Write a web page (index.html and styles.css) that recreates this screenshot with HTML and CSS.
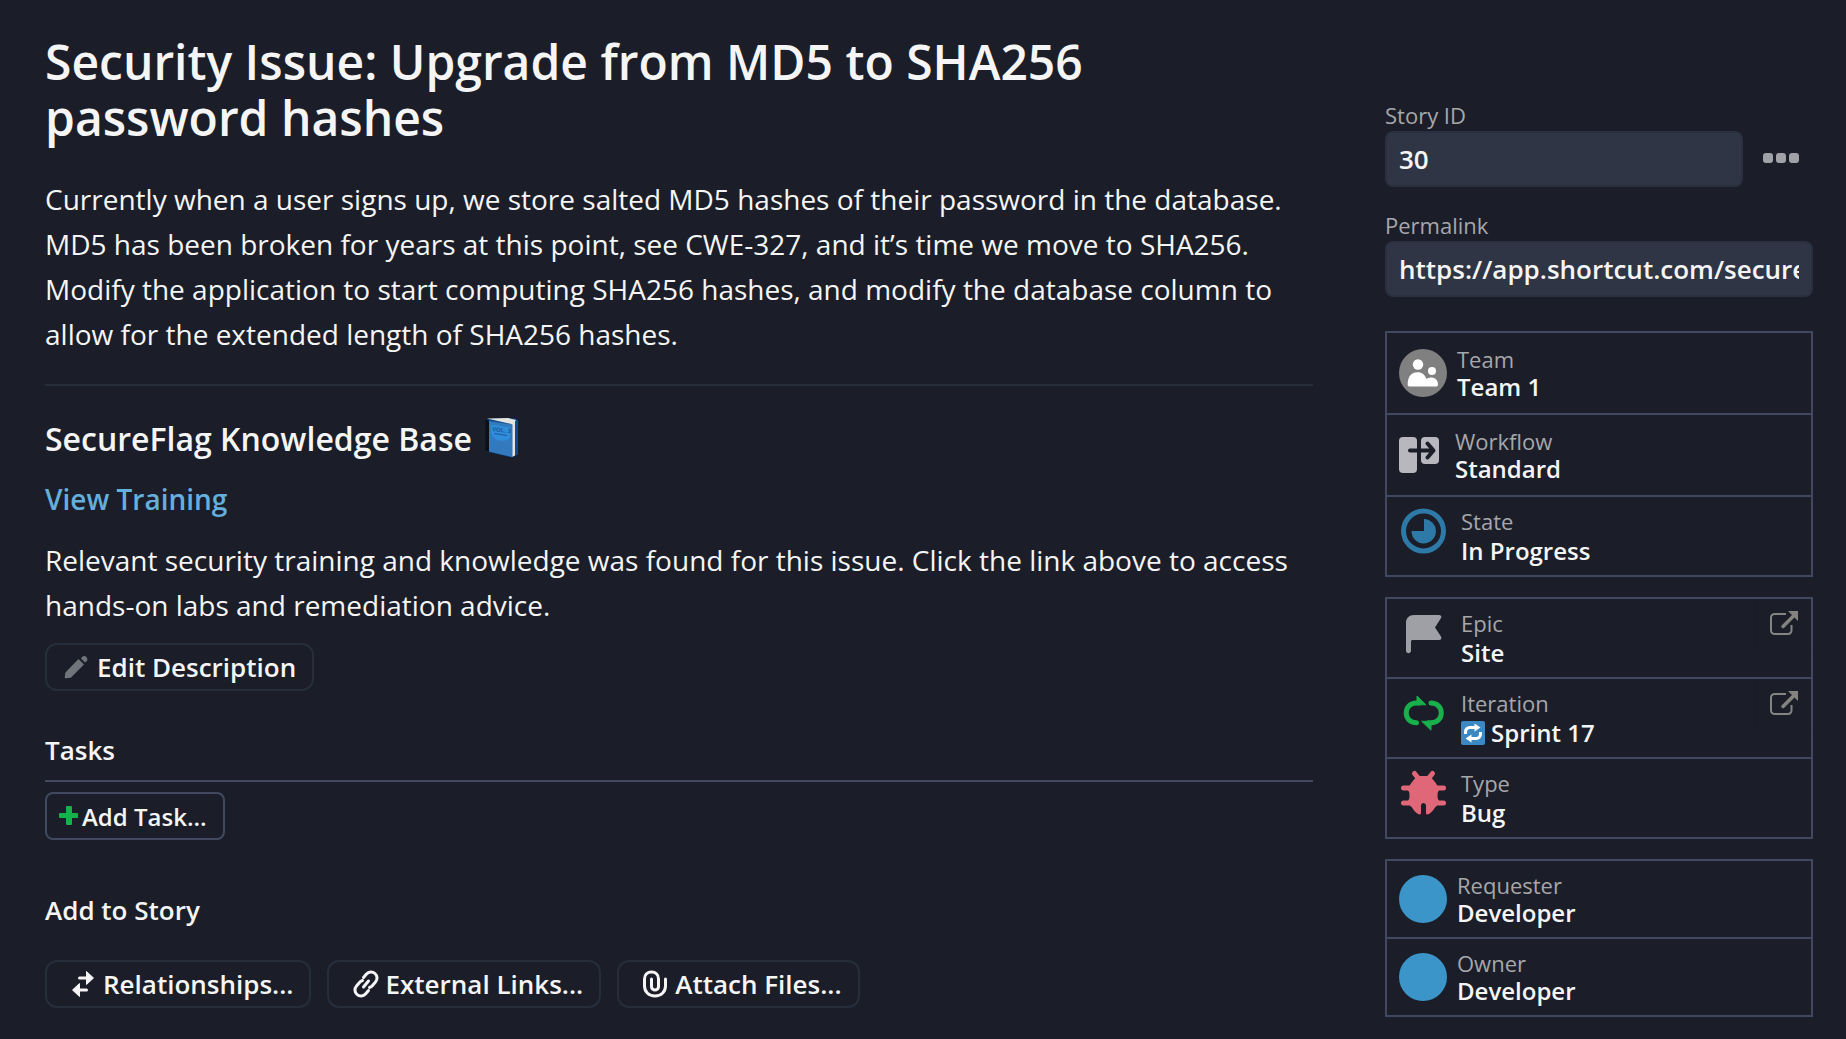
FILE: index.html
```html
<!DOCTYPE html>
<html lang="en">
<head>
  <meta charset="UTF-8">
  <meta name="viewport" content="width=device-width, initial-scale=1.0">
  <link rel="stylesheet" href="styles.css">
  <title>Security Issue: Upgrade from MD5 to SHA256 password hashes</title>
</head>
<body>

  <div class="story">
    <main class="story-main">
      <h1>Security Issue: Upgrade from MD5 to SHA256 password hashes</h1>

      <div class="description">
        <p>Currently when a user signs up, we store salted MD5 hashes of their password in the database. MD5 has been broken for years at this point, see CWE-327, and it’s time we move to SHA256. Modify the application to start computing SHA256 hashes, and modify the database column to allow for the extended length of SHA256 hashes.</p>
        <hr>
        <h2>SecureFlag Knowledge Base
          <svg class="book" viewBox="0 0 36 42" aria-hidden="true">
            <path d="M3 2L31 1.500l3 2v34l-6 3L3 34.500z" fill="#0f4a8c"/>
            <path d="M1.500 2l4 2v31l-4-1.500z" fill="#0b0f18"/>
            <path d="M3 1.500L24 1 32 3l-1 1.500v34L27.500 40V7z" fill="#e4e4e0"/>
            <path d="M5 4L28.500 7.500V40L5 34.500z" fill="#3379bd"/>
            <path d="M7 7.500l19 3v10c-2 5-14 4-17-1l-2-4z" fill="#2f8ddb"/>
            <text x="8" y="14" class="book-text" transform="rotate(7 8 14)">VOL. 3</text>
            <path d="M10 16.500l13 2" stroke="#1c5a9e" stroke-width="1"/>
          </svg>
        </h2>
        <p><a href="#" class="training-link">View Training</a></p>
        <p>Relevant security training and knowledge was found for this issue. Click the link above to access hands-on labs and remediation advice.</p>
      </div>

      <button type="button" class="btn btn-edit">
        <svg width="26" height="26" viewBox="0 0 26 26" aria-hidden="true">
          <path d="M2.500 23.500l.5-4.500L15.500 6l4.500 4.500L7.500 23z" fill="#70747b" stroke="#70747b" stroke-width="1.500" stroke-linejoin="round"/>
          <path d="M18 4.500l1.500-2c2.500-2 6 1.500 4.500 4.500l-2 1.500z" fill="#70747b"/>
        </svg>
        Edit Description
      </button>

      <section class="tasks">
        <h3>Tasks</h3>
        <button type="button" class="btn btn-task">
          <svg width="20" height="20" viewBox="0 0 20 20" fill="#18b04b" aria-hidden="true">
            <rect x="7" y="0" width="6" height="19" rx="1"/>
            <rect x="0" y="7" width="19" height="5" rx="1"/>
          </svg>
          Add Task...
        </button>
      </section>

      <section class="add-to-story">
        <h3>Add to Story</h3>
        <div class="btn-row">
          <button type="button" class="btn">
            <svg width="26" height="28" viewBox="0 0 26 28" aria-hidden="true">
              <g fill="#f5f5f5">
                <path d="M15.500 1.500L22.500 8l-7 6.500z" stroke="#f5f5f5" stroke-linejoin="round"/>
                <path d="M8.500 13.500L1.500 20l7 6.500z" stroke="#f5f5f5" stroke-linejoin="round"/>
              </g>
              <path d="M8.500 8H17M7 20h8.500" stroke="#f5f5f5" stroke-width="3" stroke-linecap="round"/>
            </svg>
            Relationships...
          </button>
          <button type="button" class="btn">
            <svg width="26" height="28" viewBox="0 0 26 28" fill="none" stroke="#f5f5f5" stroke-width="3" stroke-linecap="round" aria-hidden="true">
              <path d="M10.500 7.500l3-3.500a6 6 0 0 1 9 8l-3 3.500a6 6 0 0 1-3 2"/>
              <path d="M15.500 20.500l-3 3.500a6 6 0 0 1-9-8l3-3.500a6 6 0 0 1 3-2"/>
              <path d="M10.500 17l5-6"/>
            </svg>
            External Links...
          </button>
          <button type="button" class="btn">
            <svg width="26" height="28" viewBox="0 0 26 28" fill="none" stroke="#f5f5f5" stroke-width="3" stroke-linecap="round" aria-hidden="true">
              <path d="M22.500 9v7c0 6-4.500 10-10.500 10S1.500 22 1.500 16V9c0-4.500 3-7 7-7s7 2.500 7 7v7.500c0 4.500-7 4.500-7 0V9"/>
            </svg>
            Attach Files...
          </button>
        </div>
      </section>
    </main>

    <aside class="sidebar">
      <div class="input-group">
        <label for="story-id">Story ID</label>
        <div class="input-row">
          <input type="text" id="story-id" value="30" readonly>
          <button type="button" class="more" aria-label="More">
            <span></span><span></span><span></span>
          </button>
        </div>
      </div>

      <div class="input-group">
        <label for="permalink">Permalink</label>
        <input type="text" id="permalink" value="https://app.shortcut.com/secureflag/story/30" readonly>
      </div>

      <div class="fields">
        <button type="button" class="field">
          <svg width="48" height="48" viewBox="0 0 48 48" aria-hidden="true">
            <circle cx="24" cy="24" r="24" fill="#808080"/>
            <g fill="#fff">
              <circle cx="19" cy="15.500" r="5.200"/>
              <circle cx="33" cy="22" r="4"/>
              <path d="M8.700 35.500C8.700 28 12 23.300 18.500 23.300c4.500 0 7.500 2.500 9 6.700 1.500-1 3-1.500 5-1.500 4 0 6.500 3 6.500 7 0 1.500-1 2-2 2H11c-1.500 0-2.300-.5-2.300-2z"/>
            </g>
          </svg>
          <span class="field-text">
            <span class="field-label">Team</span>
            <span class="field-value">Team 1</span>
          </span>
        </button>
        <button type="button" class="field field-workflow">
          <svg width="40" height="36" viewBox="0 0 40 36" aria-hidden="true">
            <rect x="0" y="0" width="18" height="36" rx="4" fill="#b8b7bd"/>
            <rect x="22" y="0" width="18" height="27" rx="4" fill="#b8b7bd"/>
            <path d="M11 13.500h22M28.500 6.500l6 7-6 7" fill="none" stroke="#1b1e28" stroke-width="4" stroke-linecap="round" stroke-linejoin="round"/>
          </svg>
          <span class="field-text">
            <span class="field-label">Workflow</span>
            <span class="field-value">Standard</span>
          </span>
        </button>
        <button type="button" class="field field-tall">
          <svg width="48" height="48" viewBox="0 0 48 48" aria-hidden="true">
            <circle cx="24.500" cy="25" r="20" fill="none" stroke="#2d79a8" stroke-width="5"/>
            <path d="M25 13a12.200 12.200 0 1 1-12.500 12H25z" fill="#2d79a8"/>
          </svg>
          <span class="field-text">
            <span class="field-label">State</span>
            <span class="field-value">In Progress</span>
          </span>
        </button>
      </div>

      <div class="fields">
        <div class="field-wrap">
          <button type="button" class="field field-tall">
            <svg width="48" height="48" viewBox="0 0 48 48" aria-hidden="true">
              <path d="M7 42.500V15c0-5 3-8 8-8h25c2 0 3 1.500 2 3l-6 9.500 6 9c1 2 0 3.500-2 3.500H14c-1.500 0-2 .5-2 2v8.500c0 3.500-5 3.500-5 0z" fill="#9fa0a6"/>
            </svg>
            <span class="field-text">
              <span class="field-label">Epic</span>
              <span class="field-value">Site</span>
            </span>
          </button>
          <a href="#" class="open-link" aria-label="Open epic">
            <svg width="28" height="24" viewBox="0 0 28 24" aria-hidden="true">
              <path d="M16 3H4.500a3.500 3.500 0 0 0-3.500 3.500v13A3.500 3.500 0 0 0 4.500 23H18a3.500 3.500 0 0 0 3.500-3.500V14" fill="none" stroke="#83837f" stroke-width="2"/>
              <path d="M13 15.500L25 3.500" stroke="#83837f" stroke-width="3.500" stroke-linecap="round"/>
              <path d="M18 0h10v10z" fill="#83837f"/>
            </svg>
          </a>
        </div>
        <div class="field-wrap">
          <button type="button" class="field field-tall">
            <svg width="48" height="48" viewBox="0 0 48 48" aria-hidden="true">
              <g fill="none" stroke="#18b04b" stroke-width="5" stroke-linecap="round">
                <path d="M20 15h-2.500C11 15 7.200 19.500 7.200 24.800s3.800 9.900 10.300 9.900"/>
                <path d="M29.500 34.700H32c6.500 0 10.300-4.600 10.300-9.900S38.500 15 32 15"/>
              </g>
              <path d="M18 8l9 8.800h-9zM32 42.200l-9.300-8.900H32z" fill="#18b04b" stroke="#18b04b" stroke-width="1" stroke-linejoin="round"/>
            </svg>
            <span class="field-text">
              <span class="field-label">Iteration</span>
              <span class="field-value">
                <svg class="sprint" width="24" height="24" viewBox="0 0 24 24" aria-hidden="true">
                  <rect width="24" height="24" rx="2" fill="#3b88c3"/>
                  <path d="M4.500 13v-1.500C4.500 8 6.500 6.500 9 6.500h6M19.500 11v1.500c0 3.500-2 5-4.500 5H9" fill="none" stroke="#fff" stroke-width="3"/>
                  <path d="M13.500 2.500l6 4-6 4zM10.500 21.500l-6-4 6-4z" fill="#fff"/>
                </svg>
                Sprint 17
              </span>
            </span>
          </button>
          <a href="#" class="open-link" aria-label="Open iteration">
            <svg width="28" height="24" viewBox="0 0 28 24" aria-hidden="true">
              <path d="M16 3H4.500a3.500 3.500 0 0 0-3.500 3.500v13A3.500 3.500 0 0 0 4.500 23H18a3.500 3.500 0 0 0 3.500-3.500V14" fill="none" stroke="#83837f" stroke-width="2"/>
              <path d="M13 15.500L25 3.500" stroke="#83837f" stroke-width="3.500" stroke-linecap="round"/>
              <path d="M18 0h10v10z" fill="#83837f"/>
            </svg>
          </a>
        </div>
        <button type="button" class="field field-tall">
          <svg width="48" height="48" viewBox="0 0 48 48" aria-hidden="true">
            <g stroke="#e06777" stroke-width="5" stroke-linecap="round" fill="none">
              <path d="M15.500 5.500l4 5M33.500 5.500l-4 5M4.500 20H12M44.500 20H37M4.500 35H12M44.500 35H37"/>
            </g>
            <path d="M18 8h13l5 6c1.500 2 2.500 4 4 5.500v3c-1 1-1.500 2-1.500 5s.5 4 1.500 5v3l-4 4c-1.500 2.500-3 4.500-6 6.500-2 1-3 .5-3-1.500v-7c0-3.500-5-3.500-5 0v7c0 2-1 2.500-3 1.500-3-2-4.500-4-6-6.500l-4-4v-3c1-1 1.500-2 1.500-5s-.5-4-1.500-5v-3c1.500-1.500 2.500-3.500 4-5.500z" fill="#e06777"/>
          </svg>
          <span class="field-text">
            <span class="field-label">Type</span>
            <span class="field-value">Bug</span>
          </span>
        </button>
      </div>

      <div class="fields fields-people">
        <button type="button" class="field">
          <span class="avatar"></span>
          <span class="field-text">
            <span class="field-label">Requester</span>
            <span class="field-value">Developer</span>
          </span>
        </button>
        <button type="button" class="field">
          <span class="avatar"></span>
          <span class="field-text">
            <span class="field-label">Owner</span>
            <span class="field-value">Developer</span>
          </span>
        </button>
      </div>
    </aside>
  </div>

</body>
</html>
```

FILE: styles.css
```css
* {
  box-sizing: border-box;
}

body {
  margin: 0;
  background-color: #1b1e28;
  color: #f5f5f5;
  font-family: 'Open Sans', sans-serif;
  font-size: 28px;
  line-height: 45px;
}

h1, h2, h3, p {
  margin: 0;
}

button, input {
  font-family: inherit;
  color: inherit;
}

button {
  background: none;
  border: none;
  cursor: pointer;
}

svg {
  flex-shrink: 0;
}

.story {
  display: grid;
  grid-template-columns: 1fr 428px;
  gap: 72px;
  padding: 34px 33px 0 45px;
}

h1 {
  padding-right: 120px;
  margin-bottom: 31px;
  font-size: 48px;
  font-weight: 600;
  line-height: 56px;
}

.description p {
  margin-bottom: 16px;
}

.description p:last-child {
  margin-bottom: 15px;
}

.description hr {
  margin: 27px 0 31px;
  border: none;
  border-top: 2px solid #272d3b;
}

h2 {
  display: flex;
  align-items: center;
  gap: 12px;
  margin-bottom: 16px;
  font-size: 32px;
  font-weight: 600;
  line-height: 44px;
}

.book {
  width: 36px;
  height: 42px;
  margin-bottom: 2px;
}

.book-text {
  font-size: 6px;
  font-weight: 700;
  fill: #1c5a9e;
}

.training-link {
  color: #64afdc;
  font-weight: 600;
  text-decoration: none;
}

/* buttons */
.btn {
  display: inline-flex;
  align-items: center;
  gap: 6px;
  height: 48px;
  padding: 0 16px 0 24px;
  border: 2px solid #272d3b;
  border-radius: 12px;
  font-size: 26px;
  font-weight: 600;
}

.btn-edit {
  gap: 8px;
  padding-left: 16px;
}

.btn-task {
  gap: 3px;
  padding-left: 12px;
  border-color: #404960;
  border-radius: 8px;
  font-size: 24px;
}

.btn-row {
  display: flex;
  gap: 16px;
}

h3 {
  font-size: 26px;
  font-weight: 600;
  line-height: 34px;
}

.btn-edit, .btn-task {
  display: flex;
}

.tasks {
  margin-top: 42px;
}

.tasks h3 {
  margin-bottom: 10px;
  padding-bottom: 13px;
  border-bottom: 2px solid #404960;
}

.add-to-story {
  margin-top: 53px;
}

.add-to-story h3 {
  margin-bottom: 33px;
}

/* sidebar */
.sidebar {
  padding-top: 67px;
}

.input-group {
  margin-bottom: 24px;
}

.input-group label {
  display: block;
  margin-bottom: 2px;
  color: #a6a7ab;
  font-size: 22px;
  line-height: 28px;
}

.input-group input {
  display: block;
  width: 100%;
  min-width: 0;
  height: 56px;
  padding: 0 12px;
  border: 2px solid #2a3040;
  border-radius: 8px;
  background-color: #2f3544;
  font-size: 26px;
  font-weight: 600;
}

.input-row {
  display: flex;
  align-items: center;
  gap: 20px;
}

.more {
  display: flex;
  flex-shrink: 0;
  gap: 3px;
  padding: 0 14px 2px 0;
}

.more span {
  width: 10px;
  height: 10px;
  border-radius: 3px;
  background-color: #a1a2a7;
}

.fields {
  margin-bottom: 20px;
  border: 2px solid #404960;
}

.input-group + .fields {
  margin-top: 34px;
}

.fields > * + * {
  border-top: 2px solid #404960;
}

.field {
  display: flex;
  align-items: center;
  gap: 10px;
  width: 100%;
  padding: 12px;
  text-align: left;
}

.field-workflow {
  gap: 16px;
}

.field-tall {
  align-items: flex-start;
  gap: 14px;
  padding: 9px 12px;
}

.fields-people .field {
  padding: 10px 12px;
}

.field-text {
  display: flex;
  flex-direction: column;
  line-height: 28px;
}

.field-tall .field-text {
  line-height: 30px;
}

.field-label {
  color: #a6a7ab;
  font-size: 22px;
}

.field-value {
  display: flex;
  align-items: center;
  gap: 6px;
  font-size: 24px;
  font-weight: 600;
}

.avatar {
  width: 48px;
  height: 48px;
  border-radius: 50%;
  background-color: #3b95c9;
}

.field-wrap {
  position: relative;
}

/* sits over the right end of the field */
.open-link {
  position: absolute;
  top: 0;
  right: 0;
  display: flex;
  padding: 12px 13px 16px 14px;
  border: 1px solid #191c24;
  border-width: 0 0 1px 1px;
}
```
